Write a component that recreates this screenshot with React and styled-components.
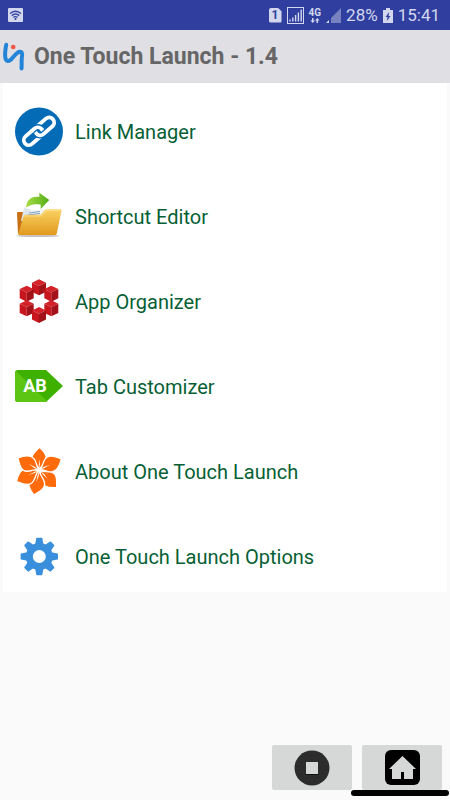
import React from 'react'
import styled, { createGlobalStyle } from 'styled-components'

const GlobalStyle = createGlobalStyle`
  * {
    box-sizing: border-box;
  }
  body {
    margin: 0;
    background-color: #fafafa;
    font-family: Roboto, "Liberation Sans", sans-serif;
  }
`

const Page = styled.div`
  display: flex;
  flex-direction: column;
  min-height: 100vh;
`
const StatusBar = styled.div`
  display: flex;
  justify-content: space-between;
  align-items: center;
  height: 30px;
  padding: 0 10px 0 8px;
  background-color: #303f9f;
  color: #d3d7ee;
  font-size: 17px;
  line-height: 20px;
`
const StatusGroup = styled.div`
  display: flex;
  align-items: center;
  gap: 5px;

  svg {
    display: block;
  }
`
const SimCard = styled.span`
  width: 13px;
  height: 15px;
  border-radius: 2px;
  clip-path: polygon(0 0, 70% 0, 100% 25%, 100% 100%, 0 100%);
  background-color: #d3d7ee;
  color: #303f9f;
  font-size: 12px;
  font-weight: 700;
  line-height: 15px;
  text-align: center;
`
const Network = styled.span`
  display: flex;
  flex-direction: column;
  align-items: center;
  font-size: 10px;
  font-weight: 700;
  line-height: 10px;
`
const Header = styled.header`
  display: flex;
  align-items: center;
  gap: 6px;
  height: 53px;
  background-color: #e0dfe4;
`
const Title = styled.h1`
  margin: 0;
  color: #666666;
  font-size: 23px;
  font-weight: 700;
  line-height: 28px;
`
const Menu = styled.nav`
  display: flex;
  flex-direction: column;
  gap: 37px;
  margin: 0 3px;
  padding: 25px 12px 11px;
  background-color: #ffffff;
`
const MenuItem = styled.a`
  display: flex;
  align-items: center;
  gap: 12px;
  color: #075f35;
  font-size: 20px;
  line-height: 28px;
  text-decoration: none;

  svg {
    flex: none;
    overflow: visible;
  }
`
const Footer = styled.footer`
  display: flex;
  justify-content: flex-end;
  gap: 10px;
  margin-top: auto;
  padding: 10px 8px;
`
const FooterButton = styled.button`
  display: flex;
  justify-content: center;
  align-items: center;
  width: 80px;
  height: 45px;
  padding: 0;
  border: none;
  border-radius: 2px;
  background-color: #d6d8d7;
`
const Handle = styled.div`
  position: fixed;
  right: 1px;
  bottom: 4px;
  width: 98px;
  height: 6px;
  border-radius: 3px;
  background-color: #000000;
`

function WifiIcon() {
  return (
    <svg width="15" height="14" viewBox="0 0 15 14" aria-hidden="true">
      <rect width="15" height="14" rx="1" fill="#d3d7ee" />
      <g fill="none" stroke="#303f9f" strokeWidth="1.4">
        <path d="M2 5.5Q7.5 .8 13 5.5" />
        <path d="M3.8 7.6Q7.5 4.4 11.2 7.6" />
        <path d="M5.5 9.4Q7.5 7.8 9.5 9.4" />
      </g>
      <circle cx="7.5" cy="11" r="1" fill="#303f9f" />
    </svg>
  )
}

function SignalIcon() {
  return (
    <svg width="17" height="17" viewBox="0 0 17 17" aria-hidden="true">
      <rect x=".5" y=".5" width="16" height="16" fill="none" stroke="#d3d7ee" />
      <path d="M3 14.5v-2M5.8 14.5v-4M8.6 14.5v-6.5M11.4 14.5v-9M14.2 14.5v-12" stroke="#d3d7ee" strokeWidth="1.4" />
    </svg>
  )
}

function DataArrows() {
  return (
    <svg width="10" height="5" viewBox="0 0 10 5" fill="#d3d7ee" aria-hidden="true">
      <path d="M2 0h1.500v2.500H5L2.700 5 .5 2.500H2zM6.500 5H8V2.500h1.500L7.300 0 5 2.500h1.500z" />
    </svg>
  )
}

function WeakSignalIcon() {
  return (
    <svg width="15" height="15" viewBox="0 0 15 15" aria-hidden="true">
      <path d="M15 0v15H5V10z" fill="#7882c0" />
      <path d="M3 12v3H0z" fill="#d3d7ee" />
    </svg>
  )
}

function BatteryIcon() {
  return (
    <svg width="10" height="15" viewBox="0 0 10 15" aria-hidden="true">
      <path d="M3 0h4v2h3v13H0V2h3z" fill="#d3d7ee" />
      <path d="M6.200 4L2.500 9H4.500L3.800 13L7.500 8H5.500z" fill="#303f9f" />
    </svg>
  )
}

function Logo() {
  return (
    <svg width="28" height="34" viewBox="0 0 28 34" aria-hidden="true">
      <path
        d="M6.2 4.8C5.2 10 4.8 14 5.3 17.5C5.9 21.5 8.5 22 11 19.5C14 16.500 16.500 12.500 19.500 11.800C22.800 11.200 22.300 15 21.800 18C21.300 22 22 25 21.500 28.500"
        fill="none"
        stroke="#2484d8"
        strokeWidth="4"
        strokeLinecap="round"
      />
      <circle cx="13.2" cy="7" r="2.3" fill="#f25445" />
    </svg>
  )
}

function LinkIcon() {
  return (
    <svg width="48" height="48" viewBox="0 0 48 48" aria-hidden="true">
      <circle cx="24" cy="23.5" r="24" fill="#046bb6" />
      <g fill="none" transform="translate(24 23.3) rotate(-41)">
        <rect x="-18.5" y="-5" width="22" height="10" rx="5" stroke="#fff" strokeWidth="3.8" />
        <rect x="-3.5" y="-5" width="22" height="10" rx="5" stroke="#046bb6" strokeWidth="6.4" />
        <rect x="-3.5" y="-5" width="22" height="10" rx="5" stroke="#fff" strokeWidth="3.8" />
        <path d="M-4.500-5H-1.500A5 5 0 0 1 3.500 0" stroke="#046bb6" strokeWidth="6.4" />
        <path d="M-6-5H-1.500A5 5 0 0 1 3.500 0V1" stroke="#fff" strokeWidth="3.8" />
      </g>
    </svg>
  )
}

function FolderIcon() {
  return (
    <svg width="48" height="48" viewBox="0 0 48 48" aria-hidden="true">
      <defs>
        <linearGradient id="folderFront" x1="0" y1="0" x2="0" y2="1">
          <stop offset="0" stopColor="#fbd263" />
          <stop offset="1" stopColor="#e09a1e" />
        </linearGradient>
        <linearGradient id="folderArrow" x1="0" y1="0" x2="1" y2="0">
          <stop offset="0" stopColor="#a5dc45" />
          <stop offset="1" stopColor="#55ad16" />
        </linearGradient>
      </defs>
      <ellipse cx="23" cy="42.8" rx="22" ry="1.3" fill="#c9c2c2" />
      <path d="M2 20Q2 19 3 19H8L10 22V41H4.500Q3 41 2.900 39z" fill="#c96f14" />
      <path d="M9 14.500L17 17L28 17V28H6z" fill="#dfe7ee" />
      <path d="M16 17.500L29 16V26H10z" fill="#f1f4f7" />
      <path d="M14 20L25 18.500M12.500 22L25 20.500" stroke="#7c9cbd" strokeWidth="1" fill="none" />
      <path
        d="M8.500 23.500Q8.700 21.800 10.500 21.800H24.500Q26 21.800 27 20.500L29.500 17.500Q30.600 16.300 32 16.300H45.500Q46.800 16.300 46.500 17.700L41.800 40.500Q41.400 42 40 42H4.500Q3 42 3.300 40.500z"
        fill="url(#folderFront)"
      />
      <path d="M9.500 23H25Q27 23 28 21.500L30.500 18.500Q31.500 17.500 33 17.500H45.500" fill="none" stroke="#fde39a" strokeWidth=".8" />
      <path d="M11 14.500C12 6 17 3 24.300 4V-.3L34.300 7L25.700 16V11.800C19 10.500 15 12 11 14.500z" fill="url(#folderArrow)" />
    </svg>
  )
}

const cubes = [[24, 9.3], [11.7, 15.7], [36.3, 15.7], [11.7, 30.3], [36.3, 30.3], [24, 37]]

function CubesIcon() {
  return (
    <svg width="48" height="48" viewBox="0 0 48 48" aria-hidden="true">
      {cubes.map(([x, y]) => (
        <g key={`${x}-${y}`} transform={`translate(${x} ${y})`}>
          <path d="M0-8L7-4.600L0-1.200L-7-4.600z" fill="#d3222a" />
          <path d="M-7-4.600L0-1.200V8L-7 4.600z" fill="#c8161e" />
          <path d="M7-4.600L0-1.200V8L7 4.600z" fill="#a31218" />
        </g>
      ))}
    </svg>
  )
}

function TagIcon() {
  return (
    <svg width="48" height="48" viewBox="0 0 48 48" aria-hidden="true">
      <path d="M3 7H31L48 23L31 39H3Q0 39 0 36V10Q0 7 3 7z" fill="#3db000" />
      <path d="M1 8L32 38L31 39H3Q0 39 0 36V10Q0 8.500 1 8z" fill="#5cc412" />
      <text x="20" y="29" fill="#fff" fontSize="18" fontWeight="700" textAnchor="middle">AB</text>
    </svg>
  )
}

const petals = [[0, 22], [63, 24], [135, 24], [192, 25], [243, 25], [299, 24]]

function FlowerIcon() {
  return (
    <svg width="48" height="48" viewBox="0 0 48 48" aria-hidden="true">
      {petals.map(([angle, size]) => (
        <g key={angle} transform={`translate(24.3 22) rotate(${angle}) scale(${size / 22})`}>
          <path
            d="M0-.5C-1-5-7.500-7-7.300-12.500C-7-17-3-19 0-22.600C5-18.500 8-14 6.800-9.500C5.800-5.500 1.500-4.500 0-.5z"
            fill="#ff6a0a"
            stroke="#fff"
            strokeWidth="1.2"
          />
          <path d="M0 0Q-1.200-5 .3-11Q.9-6 0 0z" fill="#fff" />
        </g>
      ))}
    </svg>
  )
}

const teeth = [0, 45, 90, 135, 180, 225, 270, 315]

function GearIcon() {
  return (
    <svg width="48" height="48" viewBox="0 0 48 48" aria-hidden="true">
      <g transform="translate(24.3 23.5)" fill="#3a8fdd">
        <circle r="10" fill="none" stroke="#3a8fdd" strokeWidth="7" />
        {teeth.map(angle => (
          <path key={angle} d="M-4.200-12L-3-18.200Q-2.900-18.700-2.400-18.700H2.400Q2.900-18.700 3-18.200L4.200-12z" transform={`rotate(${angle})`} />
        ))}
      </g>
    </svg>
  )
}

function StopIcon() {
  return (
    <svg width="36" height="36" viewBox="0 0 36 36" aria-hidden="true">
      <circle cx="18" cy="18" r="17.5" fill="#2c2c2c" />
      <path d="M12 12H24V25H12z" fill="#111111" />
      <path d="M12 12H24V24H12z" fill="#d6d8d7" />
    </svg>
  )
}

function HomeIcon() {
  return (
    <svg width="35" height="35" viewBox="0 0 35 35" aria-hidden="true">
      <rect width="35" height="35" rx="6" fill="#000" />
      <path d="M17.500 6L31 19H28V29H19V22H16V29H7V19H4z" fill="#d6d8d7" />
    </svg>
  )
}

const menuItems = [
  { label: 'Link Manager', Icon: LinkIcon },
  { label: 'Shortcut Editor', Icon: FolderIcon },
  { label: 'App Organizer', Icon: CubesIcon },
  { label: 'Tab Customizer', Icon: TagIcon },
  { label: 'About One Touch Launch', Icon: FlowerIcon },
  { label: 'One Touch Launch Options', Icon: GearIcon },
]

export default function App() {
  return (
    <>
      <GlobalStyle />
      <Page>
        <StatusBar>
          <WifiIcon />
          <StatusGroup>
            <SimCard>1</SimCard>
            <SignalIcon />
            <Network>
              4G
              <DataArrows />
            </Network>
            <WeakSignalIcon />
            <span>28%</span>
            <BatteryIcon />
            <span>15:41</span>
          </StatusGroup>
        </StatusBar>
        <Header>
          <Logo />
          <Title>One Touch Launch - 1.4</Title>
        </Header>
        <Menu>
          {menuItems.map(({ label, Icon }) => (
            <MenuItem key={label} href="#">
              <Icon />
              {label}
            </MenuItem>
          ))}
        </Menu>
        <Footer>
          <FooterButton aria-label="Stop">
            <StopIcon />
          </FooterButton>
          <FooterButton aria-label="Home">
            <HomeIcon />
          </FooterButton>
        </Footer>
        <Handle />
      </Page>
    </>
  )
}
